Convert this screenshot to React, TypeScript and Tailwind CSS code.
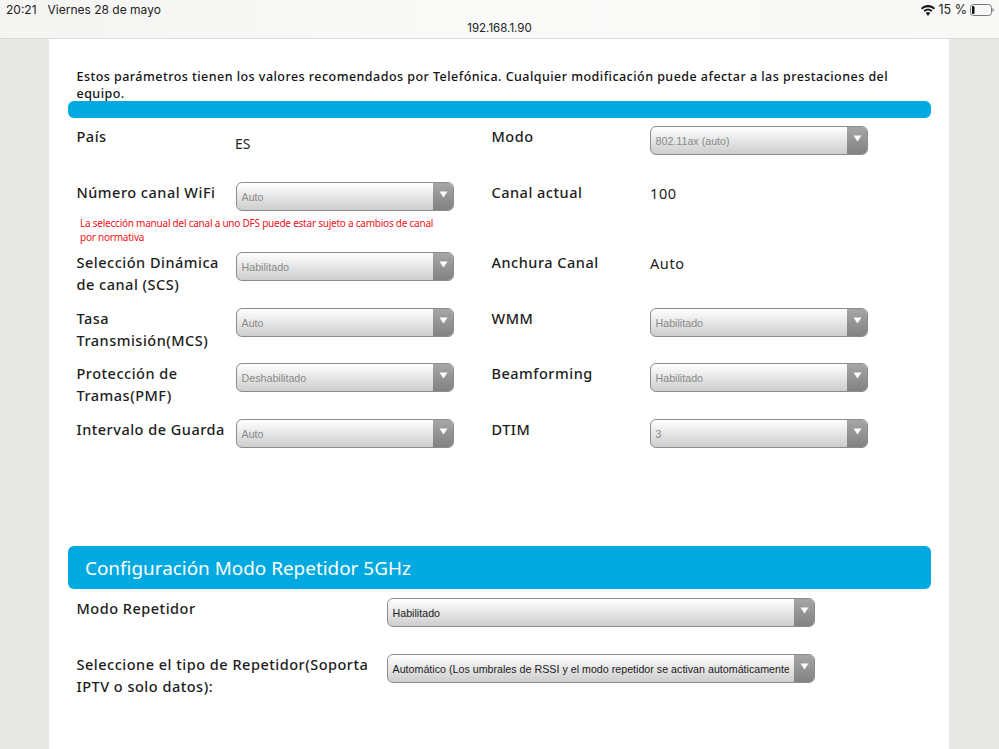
import React from "react";

const labelFont = "font-['Noto_Sans',sans-serif] text-[14.5px] leading-[22px] tracking-[0.5px] font-medium text-[#1c1c1c]";
const valueFont = "font-['Noto_Sans',sans-serif] text-[14.5px] leading-[22px] tracking-[0.6px] text-[#1c1c1c]";

function Select({ value, wide, enabled }: { value: string; wide?: boolean; enabled?: boolean }) {
  return (
    <div className={`flex h-[29px] shrink-0 overflow-hidden rounded-[6px] border border-[#8c8c8c] bg-gradient-to-b from-white to-[#cdcdcd] ${wide ? "w-[428px]" : "w-[218px]"}`}>
      <div className={`min-w-0 flex-1 overflow-hidden whitespace-nowrap pl-[4.5px] mr-[5px] pt-[1px] font-['Liberation_Sans',sans-serif] text-[10.7px] leading-[27px] ${enabled ? "text-[#222]" : "text-[#8a8a8a]"}`}>
        {value}
      </div>
      <div className="flex w-[20px] shrink-0 justify-center bg-gradient-to-b from-[#a6a6a6] to-[#828282] pt-[8px]">
        <svg width="9" height="7" viewBox="0 0 9 7">
          <path d="M0.5 0.5h8L4.5 6.5z" fill="#fff" />
        </svg>
      </div>
    </div>
  );
}

function Label({ children, width }: { children: React.ReactNode; width: string }) {
  return <div className={`${labelFont} -mt-[1px] shrink-0 pl-[0.5px] ${width}`}>{children}</div>;
}

function Row({ className, left, right }: { className: string; left: React.ReactNode; right: React.ReactNode }) {
  return (
    <div className={`flex ${className}`}>
      <div className="flex w-[415px] shrink-0">{left}</div>
      <div className="flex">{right}</div>
    </div>
  );
}

function StatusBar() {
  return (
    <div className="relative h-[39px] border-b border-[#dcdcda] bg-gradient-to-r from-[#f4f4f2] via-[#fafaf9] to-[#f8f8f7] font-['Inter',sans-serif] text-[#222]">
      <div className="flex items-center justify-between pl-[6px] pr-[5px] pt-[2px] text-[12px] leading-[16px]">
        <div className="flex gap-[11px]">
          <span>20:21</span>
          <span>Viernes 28 de mayo</span>
        </div>
        <div className="flex items-center gap-[3px]">
          <svg width="14" height="11" viewBox="0 0 13 10">
            <path d="M6.5 0C4 0 1.8 1 0 2.8L1.3 4.1C2.7 2.7 4.5 1.9 6.5 1.9s3.8.8 5.2 2.2L13 2.8C11.2 1 9 0 6.5 0z" fill="#111" />
            <path d="M6.5 3.3c-1.6 0-3 .6-4.1 1.7l1.3 1.3c.7-.7 1.7-1.2 2.8-1.2s2.1.5 2.8 1.2L10.6 5C9.5 3.9 8.1 3.3 6.5 3.3z" fill="#111" />
            <path d="M6.5 6.5c-.8 0-1.5.3-2 .8l2 2.7 2-2.7c-.5-.5-1.2-.8-2-.8z" fill="#111" />
          </svg>
          <span className="pl-[1px] text-[12.5px]">15 %</span>
          <svg width="24" height="12" viewBox="0 0 24 12">
            <rect x="0.5" y="0.5" width="21" height="11" rx="3" fill="none" stroke="#777" />
            <rect x="2" y="2" width="2.5" height="8" rx="1" fill="#111" />
            <path d="M23 4.5v3" stroke="#777" strokeWidth="1.2" />
          </svg>
        </div>
      </div>
      <div className="pt-[2px] text-center text-[11.5px] leading-[16px]">192.168.1.90</div>
    </div>
  );
}

export default function App() {
  return (
    <div className="h-[749px] w-[999px] overflow-hidden bg-[#e8e8e6]">
      <StatusBar />
      <main className="ml-[49px] h-[710px] w-[900px] bg-white px-[19px]">
        <p className="pl-[8.5px] pr-[30px] pt-[29px] font-['Noto_Sans',sans-serif] text-[12.5px] font-medium leading-[17px] tracking-[0.46px] text-[#111]">
          Estos parámetros tienen los valores recomendados por Telefónica. Cualquier modificación puede afectar a las prestaciones del equipo.
        </p>
        <div className="mt-[-1px] h-[17px] w-[863px] rounded-[6px] bg-[#00a9e0]" />

        <div className="pl-[8px] pt-[8px]">
          <Row
            className="h-[56px]"
            left={
              <>
                <Label width="w-[159px]">País</Label>
                <span className="pt-[8px] font-['Noto_Sans',sans-serif] text-[14px] leading-[20px] text-[#222]">ES</span>
              </>
            }
            right={
              <>
                <Label width="w-[159px]">Modo</Label>
                <Select value="802.11ax (auto)" />
              </>
            }
          />
          <div className="h-[70px]">
            <Row
              className=""
              left={
                <>
                  <Label width="w-[160px]">Número canal WiFi</Label>
                  <Select value="Auto" />
                </>
              }
              right={
                <>
                  <Label width="w-[159px]">Canal actual</Label>
                  <span className={valueFont}>100</span>
                </>
              }
            />
            <p className="w-[370px] pl-[4px] pt-[5px] font-['Noto_Sans',sans-serif] text-[10px] leading-[14px] tracking-[-0.23px] text-[#f01020]">
              La selección manual del canal a uno DFS puede estar sujeto a cambios de canal por normativa
            </p>
          </div>
          <Row
            className="h-[56px]"
            left={
              <>
                <Label width="w-[160px]">Selección Dinámica de canal (SCS)</Label>
                <Select value="Habilitado" />
              </>
            }
            right={
              <>
                <Label width="w-[159px]">Anchura Canal</Label>
                <span className={valueFont}>Auto</span>
              </>
            }
          />
          <Row
            className="h-[55px]"
            left={
              <>
                <Label width="w-[160px]">Tasa Transmisión(MCS)</Label>
                <Select value="Auto" />
              </>
            }
            right={
              <>
                <Label width="w-[159px]">WMM</Label>
                <Select value="Habilitado" />
              </>
            }
          />
          <Row
            className="h-[56px]"
            left={
              <>
                <Label width="w-[160px]">Protección de Tramas(PMF)</Label>
                <Select value="Deshabilitado" />
              </>
            }
            right={
              <>
                <Label width="w-[159px]">Beamforming</Label>
                <Select value="Habilitado" />
              </>
            }
          />
          <Row
            className="h-[55px]"
            left={
              <>
                <Label width="w-[160px]">Intervalo de Guarda</Label>
                <Select value="Auto" />
              </>
            }
            right={
              <>
                <Label width="w-[159px]">DTIM</Label>
                <Select value="3" />
              </>
            }
          />
        </div>

        <h2 className="mt-[72px] h-[43px] w-[863px] rounded-[6px] bg-[#00a9e0] pl-[17px] font-['Noto_Sans',sans-serif] text-[18.9px] leading-[45px] text-white">
          Configuración Modo Repetidor 5GHz
        </h2>
        <div className="flex h-[65px] pl-[8px] pt-[9px]">
          <Label width="w-[311px]">Modo Repetidor</Label>
          <Select value="Habilitado" wide enabled />
        </div>
        <div className="flex pl-[8px]">
          <Label width="w-[311px]">Seleccione el tipo de Repetidor(Soporta IPTV o solo datos):</Label>
          <Select value="Automático (Los umbrales de RSSI y el modo repetidor se activan automáticamente)" wide enabled />
        </div>
      </main>
    </div>
  );
}
